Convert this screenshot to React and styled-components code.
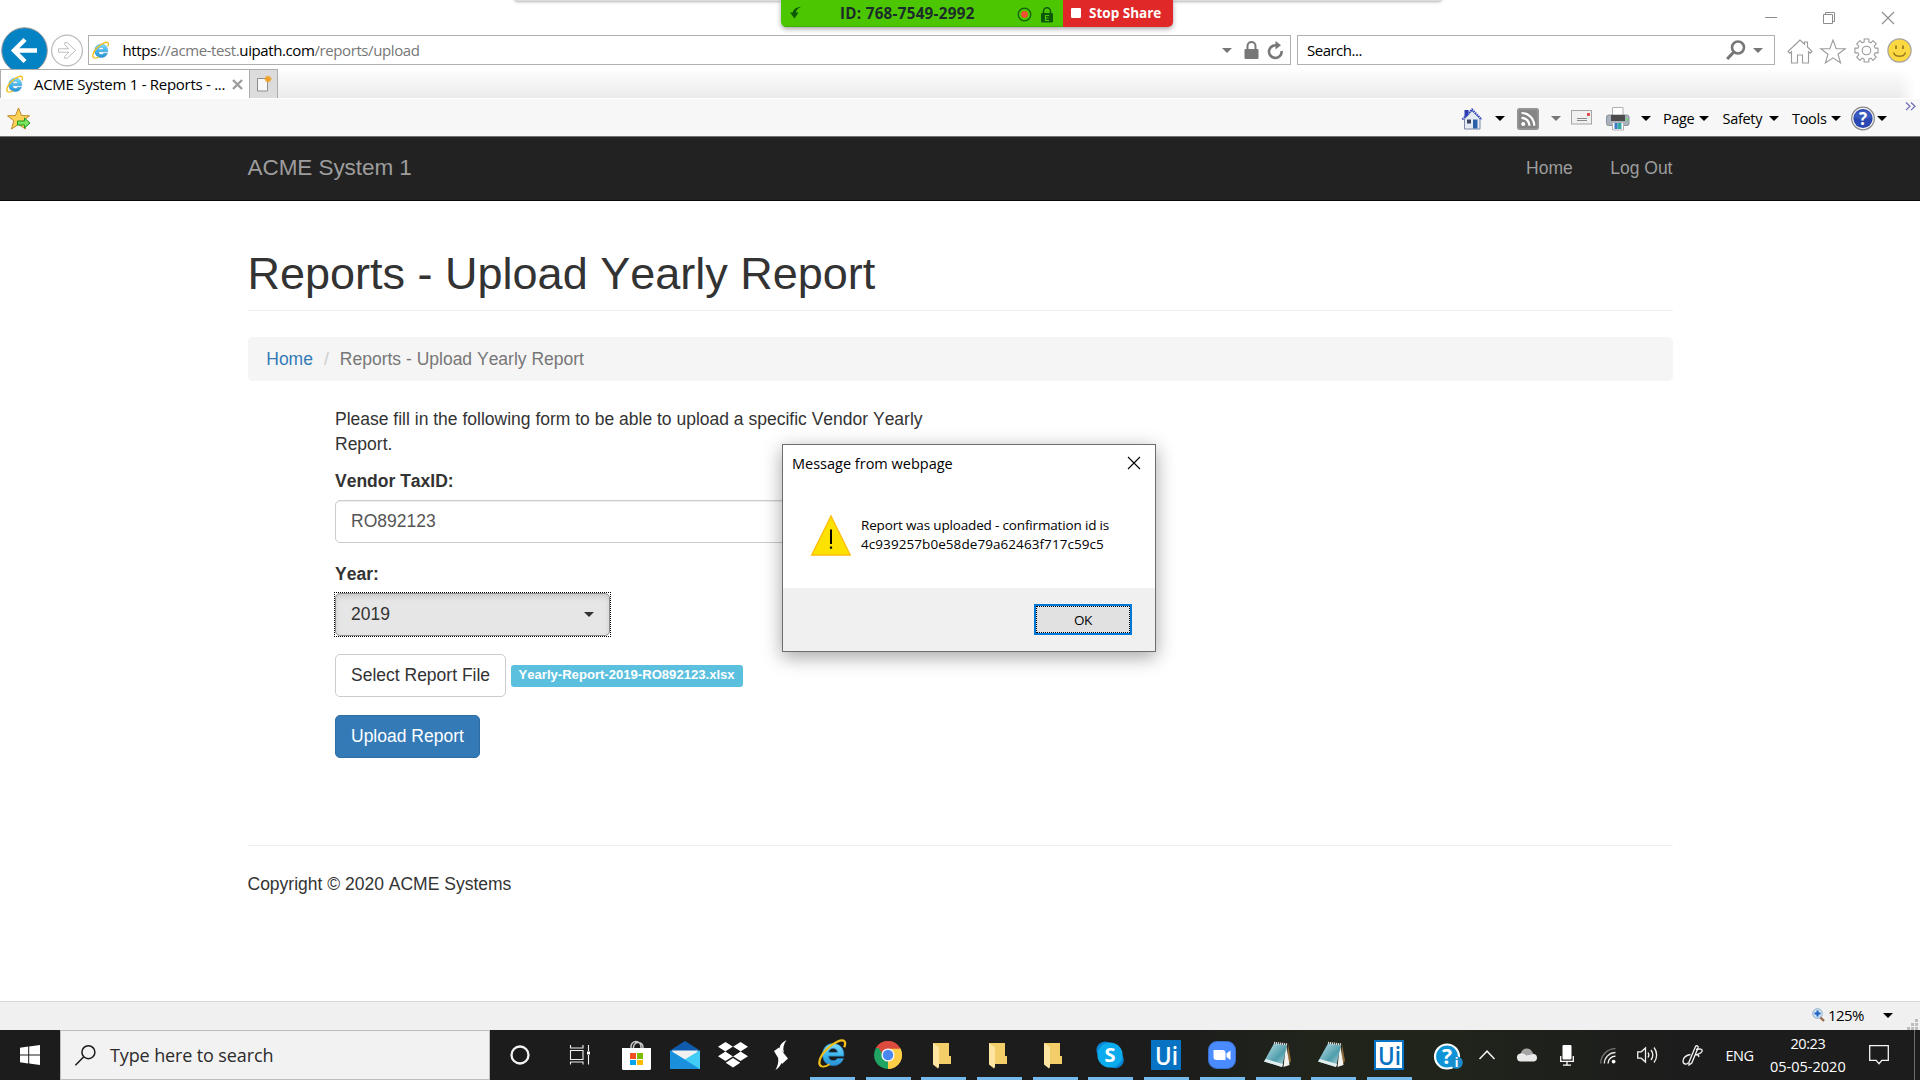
import React from "react";
import styled, { createGlobalStyle } from "styled-components";

const UI = '"Open Sans", "Noto Sans", sans-serif';
const ARIAL = '"Liberation Sans", Arial, sans-serif';

const GlobalStyle = createGlobalStyle`
  *, *::before, *::after { box-sizing: border-box; }
  html, body { margin: 0; padding: 0; background: #fff; overflow: hidden; }
  svg { display: block; overflow: visible; }
`;

const Screen = styled.div`
  position: relative;
  width: 1920px;
  height: 1080px;
  display: flex;
  flex-direction: column;
  background: #fff;
  overflow: hidden;
  font-family: ${UI};
`;

/* A fixed-width place in a bar, with the space that precedes it. */
const Slot = styled.div`
  flex: none;
  display: flex;
  align-items: center;
  width: ${(p) => p.$w}px;
  margin-left: ${(p) => p.$ml || 0}px;
  margin-top: ${(p) => p.$mt || 0}px;
`;

const Label = styled.span`
  white-space: nowrap;
  font-size: ${(p) => p.$size || 15}px;
  font-weight: ${(p) => p.$weight || 400};
  letter-spacing: ${(p) => p.$ls || 0}px;
  color: ${(p) => p.$color || "#000"};
`;

const Caret = styled.i`
  display: block;
  border: ${(p) => p.$s || 5}px solid transparent;
  border-top-color: ${(p) => p.$color || "#000"};
  border-bottom: 0;
`;

/* ---------- browser chrome ---------- */

const Caption = styled.div`
  height: 34px;
  flex: none;
  display: flex;
  align-items: flex-start;
  padding-top: 11px;
`;

const AddressRow = styled.div`
  height: 35px;
  flex: none;
  display: flex;
  align-items: flex-start;
`;

const BackButton = styled.div`
  width: 50px;
  height: 42px;
  margin-top: -7px;
  overflow: hidden;
`;

const ForwardButton = styled.div`
  width: 34px;
  height: 34px;
  margin-top: 0;
`;

const Field = styled.div`
  height: 30px;
  margin-top: 1px;
  margin-left: ${(p) => p.$ml}px;
  width: ${(p) => p.$w}px;
  flex: none;
  border: 1px solid #b0b0b0;
  background: #fff;
  display: flex;
  align-items: center;
`;

const Dim = styled.span`
  color: #777;
`;

const TabRow = styled.div`
  height: 29px;
  flex: none;
  display: flex;
  background: linear-gradient(#fff 0%, #f8f8f8 30%, #ebebeb 100%);
`;

const Tab = styled.div`
  width: 250px;
  border: 1px solid #adadad;
  border-bottom: 0;
  background: #fff;
  display: flex;
  align-items: center;
`;

const NewTab = styled.div`
  width: 28px;
  border: 1px solid #adadad;
  border-left: 0;
  border-bottom: 0;
  background: #dcdcdc;
  display: flex;
  align-items: center;
  justify-content: center;
`;

const TabRowEdge = styled.div`
  width: 22px;
  margin-left: auto;
  background: linear-gradient(90deg, rgba(255, 255, 255, 0), #fff 80%);
`;

const CommandBar = styled.div`
  height: 39px;
  flex: none;
  display: flex;
  align-items: center;
  padding-top: 2px;
  background: #f7f7f7;
  border-top: 1px solid #fff;
  border-bottom: 1px solid #6f7373;
`;

/* ---------- meeting share bar ---------- */

const ShareShadow = styled.div`
  position: absolute;
  top: -8px;
  left: 514px;
  width: 928px;
  height: 9px;
  border-radius: 4px;
  background: #dcdcdc;
  box-shadow: 0 1px 3px rgba(0, 0, 0, 0.3);
`;

const ShareBar = styled.div`
  position: absolute;
  top: 0;
  left: 781px;
  width: 392px;
  height: 27px;
  display: flex;
  border-radius: 0 0 5px 5px;
  overflow: hidden;
  box-shadow: 0 2px 5px rgba(0, 0, 0, 0.35);
`;

const ShareInfo = styled.div`
  width: 282px;
  display: flex;
  align-items: center;
  background: #4cc600;
  border-bottom: 1px solid #40ae00;
`;

const StopShare = styled.div`
  width: 110px;
  display: flex;
  align-items: center;
  background: #e02828;
  padding-bottom: 2px;
`;

const StopSquare = styled.i`
  width: 10px;
  height: 10px;
  margin-left: 8px;
  background: #fff;
  border-radius: 1px;
`;

/* ---------- web page ---------- */

const Page = styled.main`
  flex: 1;
  display: flex;
  flex-direction: column;
  font-family: ${ARIAL};
  font-size: 17.5px;
  line-height: 25px;
  font-kerning: none;
  color: #333;
`;

const Navbar = styled.nav`
  height: 64px;
  flex: none;
  background: #222;
  border-bottom: 1px solid #080808;
  padding: 19px 247.5px 0;
  display: flex;
  justify-content: space-between;
  color: #9d9d9d;
`;

const Brand = styled.div`
  font-size: 22.5px;
  letter-spacing: -0.06px;
  margin-top: -1px;
`;

const NavLinks = styled.div`
  display: flex;
  gap: 37.5px;
`;

const Container = styled.div`
  width: 1425px;
  margin: 0 auto;
  display: flex;
  flex-direction: column;
`;

const Title = styled.h1`
  margin: 48px 0 0;
  padding-bottom: 11.5px;
  border-bottom: 1px solid #eee;
  font-size: 45px;
  line-height: 49.5px;
  font-weight: 400;
`;

const Breadcrumb = styled.div`
  margin-top: 26px;
  height: 44px;
  padding: 9.5px 18.75px;
  border-radius: 5px;
  background: #f5f5f5;
  color: #777;
  display: flex;
`;

const Crumb = styled.span`
  color: ${(p) => p.$color || "#777"};
  margin-right: ${(p) => p.$mr || 0}px;
`;

const Form = styled.div`
  margin: 26px 0 0 87.5px;
  width: 602px;
  display: flex;
  flex-direction: column;
  align-items: flex-start;
`;

const Intro = styled.p`
  margin: 0 0 12px;
`;

const FieldLabel = styled.label`
  font-weight: 700;
  margin-bottom: 6px;
`;

const Box = styled.div`
  height: 43px;
  margin-bottom: 18px;
  padding: 8px 15px;
  border: 1px solid #ccc;
  border-radius: 5px;
  background: #fff;
`;

const TextInput = styled(Box)`
  width: 100%;
  margin-bottom: 19px;
  color: #555;
  box-shadow: inset 0 1px 1px rgba(0, 0, 0, 0.075);
`;

const FocusRing = styled.div`
  width: 277px;
  margin: -1px 0 17px -1px;
  border: 1px dotted #000;
`;

const Select = styled(Box)`
  margin: 0;
  display: flex;
  align-items: center;
  justify-content: space-between;
  background: #e6e6e6;
  border-color: #8c8c8c;
  box-shadow: inset 0 3px 5px rgba(0, 0, 0, 0.125);
`;

const FileRow = styled.div`
  display: flex;
  gap: 4.5px;
`;

const FileBadge = styled.span`
  margin-top: 11px;
  height: 22px;
  padding: 0 7.9px;
  border-radius: 3px;
  background: #5bc0de;
  color: #fff;
  font-size: 13.1px;
  font-weight: 700;
  line-height: 20px;
`;

const Submit = styled(Box)`
  background: #337ab7;
  border-color: #2e6da4;
  color: #fff;
`;

const Footer = styled.footer`
  margin-top: 69px;
  border-top: 1px solid #eee;
  padding-top: 26px;
`;

/* ---------- alert window ---------- */

const Dialog = styled.div`
  position: absolute;
  left: 782px;
  top: 444px;
  width: 374px;
  height: 208px;
  border: 1px solid #6d6d6d;
  background: #fff;
  display: flex;
  flex-direction: column;
  box-shadow: 0 5px 18px rgba(0, 0, 0, 0.36);
`;

const DialogTitle = styled.div`
  height: 36px;
  padding: 0 15px 0 9px;
  display: flex;
  align-items: center;
  justify-content: space-between;
`;

const DialogBody = styled.div`
  height: 107px;
  padding: 34px 0 0 28px;
  display: flex;
  gap: 10px;
`;

const DialogText = styled.div`
  display: flex;
  flex-direction: column;
  line-height: 19px;
  margin-top: 1px;
`;

const DialogFooter = styled.div`
  flex: 1;
  background: #f0f0f0;
  display: flex;
  justify-content: flex-end;
  padding: 16px 23px 0 0;
`;

const OkButton = styled.div`
  width: 98px;
  height: 31px;
  border: 2px solid #0078d7;
  background: #e1e1e1;
  outline: 1px dotted #000;
  outline-offset: -3px;
  display: flex;
  align-items: center;
  justify-content: center;
`;

/* ---------- status bar and taskbar ---------- */

const StatusBar = styled.div`
  height: 29px;
  flex: none;
  border-top: 1px solid #d7d7d7;
  background: #f0f0f0;
  display: flex;
  align-items: center;
  padding-bottom: 2px;
`;

const Taskbar = styled.div`
  height: 50px;
  flex: none;
  display: flex;
  background: linear-gradient(90deg, #1c1c1c 0%, #1c1c1c 60%, #20241b 68%, #20241b 76%, #1c1c1c 88%);
`;

const Start = styled.div`
  width: 60px;
  display: flex;
  align-items: center;
  justify-content: center;
`;

const TaskSearch = styled.div`
  width: 430px;
  border: 1px solid #bcbcbc;
  background: #f2f2f2;
  display: flex;
  align-items: center;
`;

const Pinned = styled.div`
  width: 320px;
  display: flex;
`;

const Running = styled.div`
  display: flex;
  gap: 10.7px;
`;

const AppCell = styled.div`
  width: 45px;
  height: 50px;
  padding-top: ${(p) => p.$top || 10}px;
  padding-right: ${(p) => p.$right || 1}px;
  border-bottom: 3px solid #76b9ed;
  display: flex;
  justify-content: center;
  align-items: flex-start;
`;

const Tray = styled.div`
  display: flex;
  flex: 1;
  align-items: center;
`;

const Clock = styled.div`
  width: 90px;
  margin-left: 7.5px;
  display: flex;
  flex-direction: column;
  align-items: center;
  line-height: 23px;
`;

const ShowDesktop = styled.div`
  width: 6px;
  height: 50px;
  margin-left: auto;
  border-left: 1px solid #6b6b6b;
`;

/* ---------- drawings ---------- */

const IELogo = ({ size, id }) => (
  <svg width={size} height={size} viewBox="0 0 28 28">
    <defs>
      <linearGradient id={id} x1="0" y1="0" x2="0" y2="1">
        <stop offset="0" stopColor="#7fdcfb" />
        <stop offset="0.55" stopColor="#3cb4ec" />
        <stop offset="1" stopColor="#2a8fd6" />
      </linearGradient>
    </defs>
    <path
      d="M15 3.5C9 3.5 4.5 8 4.5 14.5S9 25.7 15.2 25.7c5 0 8.800-2.700 10.300-7.200h-6.300c-.8 1.400-2.100 2.100-3.900 2.100-2.800 0-4.500-1.700-4.600-4.400h15.200C26.500 8.500 22 3.500 15 3.500zM10.800 12.200c.4-2.400 1.900-3.700 4.300-3.700 2.500 0 4 1.300 4.300 3.700z"
      fill={`url(#${id})`}
      stroke="#1c78b8"
      strokeWidth="0.6"
    />
    <path
      d="M4 26.500C-1 25 1.500 16.500 8.500 9.500 15.500 2.500 24 -1.500 26.600 1.500c1 1.200.7 3.300-.4 5.800"
      fill="none"
      stroke="#f5bf1a"
      strokeWidth="2.200"
    />
    <path d="M4 26.500c2.200.600 5-.6 7.600-2.300" fill="none" stroke="#f5bf1a" strokeWidth="1.800" />
  </svg>
);

const BackArrow = () => (
  <svg width="50" height="46" viewBox="0 0 50 46">
    <circle cx="24.500" cy="23.500" r="22.800" fill="#0383c4" stroke="#9a9a9a" strokeWidth="1" />
    <path d="M37 23.500H14M25 12.500l-11 11 11 11" fill="none" stroke="#fff" strokeWidth="4.400" />
  </svg>
);

const ForwardArrow = () => (
  <svg width="34" height="34" viewBox="0 0 34 34">
    <circle cx="17" cy="16.500" r="15.400" fill="#fff" stroke="#b9b9b9" strokeWidth="1.200" />
    <path d="M8.500 14.800h10.200l-4-4.300V8.700h2.600l8.200 7.800-8.200 7.800h-2.600v-1.800l4-4.300H8.500z" fill="none" stroke="#bdbdbd" strokeWidth="1" />
  </svg>
);

const GreyLock = () => (
  <svg width="15" height="18" viewBox="0 0 15 18">
    <path d="M3.500 9V5a4 4 0 018 0v4" fill="none" stroke="#777" strokeWidth="2" />
    <rect x="0.500" y="8" width="14" height="10" rx="1" fill="#777" />
  </svg>
);

const Refresh = () => (
  <svg width="17" height="19" viewBox="0 0 17 19">
    <path d="M11.500 5.200A6.300 6.300 0 1014.600 10" fill="none" stroke="#777" strokeWidth="2.600" />
    <path d="M8.500 0l5.500 4.200-5.500 4.300z" fill="#777" />
  </svg>
);

const Magnifier = () => (
  <svg width="19" height="20" viewBox="0 0 19 20">
    <circle cx="12" cy="7.500" r="6" fill="none" stroke="#777" strokeWidth="2.600" />
    <path d="M7.800 12L1.200 19" stroke="#777" strokeWidth="3.200" />
  </svg>
);

const HomeOutline = () => (
  <svg width="26" height="25" viewBox="0 0 26 25" fill="none" stroke="#9b9b9b" strokeWidth="1.100">
    <path d="M13 1L1 12.500l1.800 1.700 1.700-1.500V24h6v-8h5v8h6V12.700l1.700 1.500 1.800-1.700L20.500 8V3h-3v2.200z" />
  </svg>
);

const StarOutline = () => (
  <svg width="26" height="25" viewBox="0 0 26 25" fill="none" stroke="#9b9b9b" strokeWidth="1.100">
    <path d="M13 1l3.200 8.600 9 .2-7.200 5.400 2.600 8.800-7.600-5.200-7.600 5.200L8 15.200.8 9.800l9-.2z" />
  </svg>
);

const Gear = () => {
  const pts = [];
  for (let i = 0; i < 8; i++) {
    [[-0.27, 8.800], [-0.2, 11.800], [0.2, 11.800], [0.27, 8.800]].forEach(([da, r]) => {
      const a = (i * Math.PI) / 4 + da - Math.PI / 2;
      pts.push(`${(12.5 + r * Math.cos(a)).toFixed(2)},${(12.5 + r * Math.sin(a)).toFixed(2)}`);
    });
  }
  return (
    <svg width="25" height="25" viewBox="0 0 25 25" fill="none" stroke="#9b9b9b" strokeWidth="1.100">
      <polygon points={pts.join(" ")} strokeLinejoin="round" />
      <circle cx="12.500" cy="12.500" r="4.300" />
    </svg>
  );
};

const Smiley = () => (
  <svg width="25" height="25" viewBox="0 0 25 25">
    <circle cx="12.500" cy="12.500" r="11.600" fill="#fcd843" stroke="#a1a1a1" strokeWidth="1.200" />
    <path d="M9 7.500v3.500M16 7.500v3.500" stroke="#9a7d1c" strokeWidth="1.800" />
    <path d="M6.500 14.500c1.500 5 10.500 5 12 0" fill="none" stroke="#9a7d1c" strokeWidth="1.500" />
  </svg>
);

const WindowMin = () => (
  <svg width="12" height="13" viewBox="0 0 12 13"><path d="M0 6.500h12" stroke="#8c8c8c" /></svg>
);
const WindowRestore = () => (
  <svg width="13" height="13" viewBox="0 0 13 13" fill="none" stroke="#8c8c8c">
    <path d="M0.500 3.500h9v9h-9zM2.500 3.500v-2h9v9h-2" />
  </svg>
);
const WindowClose = ({ color = "#8c8c8c" }) => (
  <svg width="12" height="12" viewBox="0 0 12 12"><path d="M0 0l12 12M12 0L0 12" stroke={color} strokeWidth="1.100" /></svg>
);

const NewTabIcon = () => (
  <svg width="16" height="16" viewBox="0 0 16 16">
    <path d="M1.500 2.500h10V15h-10z" fill="#f8f8f8" stroke="#8d8d8d" />
    <path d="M12 -0.500v7M8.500 3h7M9.500 0.500l5 5M14.500 0.500l-5 5" stroke="#f0a020" strokeWidth="1.300" />
  </svg>
);

const FavStar = () => (
  <svg width="24" height="24" viewBox="0 0 24 24">
    <path d="M11.500 1l3 7.500 8 .3-6.300 5 2.300 8.200-7-4.600L4.500 22l2.300-8.200L.5 8.800l8-.3z" fill="#fbd257" stroke="#c08a2a" strokeWidth="1" />
    <path d="M10.500 14h7v-3l5.500 5-5.500 5v-3h-7z" fill="#7be35f" stroke="#1f9a22" strokeWidth="1" />
  </svg>
);

const CmdHome = () => (
  <svg width="21" height="22" viewBox="0 0 21 22">
    <path d="M2.500 11v10H18V11L10 3z" fill="#e6eaf2" stroke="#7e8ba6" strokeWidth="1" />
    <path d="M2.500 2h4v5l-4 3z" fill="#2c3bb0" />
    <path d="M0.300 11.500L10 1.500l9.700 10" fill="none" stroke="#3546c4" strokeWidth="2" strokeDasharray="1.500 0.800" />
    <path d="M5 11.500h4v4H5z" fill="#3b4664" />
    <path d="M11 11.500h4.500v9H11z" fill="#2b61a8" />
  </svg>
);

const Rss = () => (
  <svg width="22" height="22" viewBox="0 0 22 22">
    <rect width="22" height="22" rx="3" fill="#858585" />
    <rect x="1" y="1" width="20" height="20" rx="2" fill="none" stroke="#a2a2a2" />
    <circle cx="6.200" cy="16" r="2" fill="#fff" />
    <path d="M4.500 9.800a8 8 0 018 8M4.500 5a12.800 12.800 0 0112.800 12.800" fill="none" stroke="#fff" strokeWidth="2.200" />
  </svg>
);

const CmdMail = () => (
  <svg width="21" height="15" viewBox="0 0 21 15">
    <rect x="0.500" y="0.500" width="20" height="13.500" fill="#f0f0f0" stroke="#a5a5a5" />
    <path d="M6 8.500h10M6 10.500h10" stroke="#8a8a8a" />
    <rect x="16" y="3" width="3" height="3" fill="#e05050" />
  </svg>
);

const Printer = () => (
  <svg width="24" height="24" viewBox="0 0 24 24">
    <path d="M6.500 0.500h10.500V9H6.500z" fill="#fff" stroke="#b0b0b0" />
    <rect x="0.500" y="8" width="22.500" height="10.500" rx="2" fill="#a9b2ba" stroke="#8a949c" />
    <rect x="5" y="8" width="14" height="6" fill="#4b4b4b" />
    <path d="M6.500 15.500h11V23h-11z" fill="#fff" stroke="#b0b0b0" />
    <path d="M8.500 16h3v6h-3z" fill="#3a79c9" />
    <path d="M11.500 16h4v6h-4z" fill="#35a9a3" />
    <rect x="20" y="11.500" width="2" height="2" fill="#63e063" />
  </svg>
);

const HelpBall = () => (
  <svg width="24" height="25" viewBox="0 0 24 25">
    <circle cx="12" cy="12.500" r="11.300" fill="#f2f2f2" stroke="#888" strokeWidth="1.200" />
    <circle cx="12" cy="12.500" r="9.600" fill="#2a47b2" />
    <path d="M3 11a9.500 9.500 0 0118 0c-5 3-13 3-18 0z" fill="#4868c8" opacity=".6" />
    <text x="12" y="18.500" textAnchor="middle" fill="#fff" fontFamily={UI} fontSize="17" fontWeight="700">?</text>
  </svg>
);

const MoreChevrons = () => (
  <svg width="11" height="9" viewBox="0 0 11 9" fill="none" stroke="#6a6ab4" strokeWidth="1.200">
    <path d="M1 .5l4 3.800-4 3.800M6 .5l4 3.800-4 3.800" />
  </svg>
);

const ShareArrow = () => (
  <svg width="12" height="12" viewBox="0 0 12 12">
    <path d="M11 0C6 0 3 2.500 2.800 5.500H0L4.500 11.500 8.500 5.500H6C6.200 3 8 1 11 0z" fill="#0c5a08" />
  </svg>
);

const RecordDot = () => (
  <svg width="15" height="15" viewBox="0 0 15 15">
    <circle cx="7.500" cy="7.500" r="6.300" fill="none" stroke="#14600a" strokeWidth="1.300" />
    <circle cx="7.500" cy="7.500" r="3.400" fill="#f4502e" />
  </svg>
);

const GreenLock = () => (
  <svg width="12" height="16" viewBox="0 0 12 16">
    <path d="M2.500 7V4.200a3.500 3.500 0 017 0V7" fill="none" stroke="#0c5a08" strokeWidth="1.500" />
    <rect x="0" y="6" width="12" height="9.500" rx="1" fill="#0c5a08" />
    <path d="M8 8.500H4.500v5H8M4.500 11H7.500" fill="none" stroke="#4cc600" strokeWidth="1.100" />
  </svg>
);

const Warning = () => (
  <svg width="40" height="41" viewBox="0 0 40 41">
    <path d="M20 1L39.300 40H.7z" fill="#fde100" stroke="#fdbd08" strokeWidth="1.300" />
    <path d="M20 14.500v14.500" stroke="#000" strokeWidth="2" />
    <path d="M20 31.500v2.200" stroke="#000" strokeWidth="2.200" />
  </svg>
);

const ZoomGlass = () => (
  <svg width="13" height="14" viewBox="0 0 13 14">
    <path d="M8 9l4 4" stroke="#9b6a48" strokeWidth="2.400" />
    <circle cx="5.500" cy="5.500" r="4.800" fill="#cfe4f7" stroke="#8fa9c4" />
    <path d="M5.500 2.500v6M2.500 5.500h6" stroke="#1b5fc0" strokeWidth="2" />
  </svg>
);

const Grip = () => (
  <svg width="11" height="11" viewBox="0 0 11 11" fill="#bdbdbd">
    {[[8, 0], [8, 4], [4, 4], [8, 8], [4, 8], [0, 8]].map(([x, y]) => (
      <rect key={`${x}-${y}`} x={x} y={y} width="3" height="3" />
    ))}
  </svg>
);

const WindowsLogo = () => (
  <svg width="20" height="20" viewBox="0 0 20 20" fill="#fff">
    <path d="M0 2.800l8.200-1.200v7.900H0zM9.200 1.400L20 0v9.500H9.200zM0 10.500h8.200v7.900L0 17.200zM9.200 10.500H20V20L9.200 18.600z" />
  </svg>
);

const SearchGlass = () => (
  <svg width="22" height="21" viewBox="0 0 22 21" fill="none" stroke="#1a1a1a" strokeWidth="1.500">
    <circle cx="13.400" cy="7.200" r="6.500" />
    <path d="M8.600 12L.4 20.300" />
  </svg>
);

const CortanaRing = () => (
  <svg width="20" height="20" viewBox="0 0 20 20"><circle cx="10" cy="10" r="8.500" fill="none" stroke="#f4f4f4" strokeWidth="2.300" /></svg>
);

const TaskView = () => (
  <svg width="20" height="20" viewBox="0 0 20 20" fill="none" stroke="#f0f0f0" strokeWidth="1.100">
    <path d="M.5 5.500h12.500v9H.5zM.5 0v3h12.500V0M.5 19.500V17h12.500v2.500M18.500 0v6M18.500 10v9.500" />
    <rect x="17" y="6.500" width="3" height="3" fill="#fff" stroke="none" />
  </svg>
);

const Store = () => (
  <svg width="29" height="29" viewBox="0 0 29 29">
    <path d="M9 8V5.500a5 5 0 0110 0V8M11.500 8V6a4.700 4.700 0 015-4.500A4.700 4.700 0 0121 6v2" fill="none" stroke="#c9c9c9" strokeWidth="1.500" />
    <path d="M0 7h29v20.500a1.500 1.500 0 01-1.500 1.500h-26A1.500 1.500 0 010 27.500z" fill="#fff" />
    <path d="M8 12h6v6H8z" fill="#f25022" />
    <path d="M15 12h6v6h-6z" fill="#7fba00" />
    <path d="M8 19h6v5H8z" fill="#00a4ef" />
    <path d="M15 19h6v5h-6z" fill="#ffb900" />
  </svg>
);

const Mail = () => (
  <svg width="30" height="29" viewBox="0 0 30 29">
    <path d="M0 9.500L15 0l15 9.500v4H0z" fill="#0f5cae" />
    <path d="M2 9.500h26l-2 6-11 6-11-6z" fill="#f1f1f1" />
    <path d="M0 9.500l15 9 15-9V28H0z" fill="#35bdf0" />
    <path d="M0 9.500L30 28H0z" fill="#1a90dd" />
    <path d="M30 9.500V28L15 18.500z" fill="#41cdf6" />
  </svg>
);

const Dropbox = () => (
  <svg width="30" height="26" viewBox="0 0 30 26" fill="#fff">
    <path d="M7.500 0L15 4.700 7.500 9.500 0 4.700zM22.500 0L30 4.700l-7.500 4.800L15 4.700zM7.500 9.500l7.500 4.700L7.500 19 0 14.200zM22.500 9.500l7.500 4.700-7.500 4.800-7.500-4.800zM15 16l7.300 4.700L15 25.500l-7.300-4.800z" />
    <path d="M15 4.700l7.500 4.800L15 14.200 7.500 9.500z" fill="#1c1c1c" />
  </svg>
);

const SMark = () => (
  <svg width="14" height="30" viewBox="0 0 14 30" fill="#fff">
    <path d="M12.500 0C7 3 5 6.500 5.800 9.500L10 12.800C8.500 8.500 9.500 4.500 12.500 0z" />
    <path d="M0 11L5 7.500 14 18.500 8 24 6.500 22z" />
    <path d="M1.500 30c5-3.500 6.500-7 5.500-9.500L4 18c1 4-.5 8-2.500 12z" />
  </svg>
);

const Chrome = () => (
  <svg width="28" height="28" viewBox="0 0 28 28">
    <path d="M14 14L1.880 7A14 14 0 0126.120 7z" fill="#dc4b3e" />
    <path d="M14 14L26.120 7A14 14 0 0114 28z" fill="#fdcd45" />
    <path d="M14 14v14A14 14 0 011.880 7z" fill="#1fa463" />
    <path d="M14 7.500h12.400A14 14 0 0114 28l6-11z" fill="#fdcd45" />
    <path d="M1.880 7A14 14 0 0126.400 7.500H14z" fill="#dc4b3e" />
    <path d="M1.880 7l6.500 10.500L14 14 12 7.500z" fill="#1fa463" />
    <path d="M3.500 5l5 8 5.500-6z" fill="#dc4b3e" />
    <circle cx="14" cy="14" r="6.600" fill="#f4f4f4" />
    <circle cx="14" cy="14" r="5.200" fill="#4a86f0" />
  </svg>
);

const Folder = () => (
  <svg width="18" height="27" viewBox="0 0 18 27">
    <path d="M0 1h16v13h2v8H4z" fill="#f2cd68" />
    <path d="M0 1l6 4v20l-1 1.500-5-4z" fill="#fde4a0" />
  </svg>
);

const Skype = () => (
  <svg width="28" height="28" viewBox="0 0 28 28">
    <circle cx="9" cy="9" r="8.600" fill="#0a84d4" />
    <circle cx="19.500" cy="19" r="8.300" fill="#0a84d4" />
    <circle cx="14" cy="14" r="12.600" fill="#0cabed" />
    <text x="14" y="21.200" textAnchor="middle" fill="#fff" fontFamily={UI} fontSize="20" fontWeight="700">S</text>
  </svg>
);

const UiLogo = ({ light }) => (
  <svg width="30" height="30" viewBox="0 0 30 30">
    <rect width="30" height="30" rx="0.500" fill="#0773c2" />
    {light && <rect x="2" y="2" width="26" height="26" fill="#fff" />}
    <text x="15.500" y="24.500" textAnchor="middle" fill={light ? "#0773c2" : "#fff"} fontFamily={UI} fontSize="25" fontWeight="600" textLength="23" lengthAdjust="spacingAndGlyphs">
      Ui
    </text>
  </svg>
);

const ZoomApp = () => (
  <svg width="28" height="28" viewBox="0 0 28 28">
    <rect x="0.500" y="0.500" width="27" height="27" rx="8.500" fill="#4a8cff" stroke="#3a6fd0" />
    <path d="M5.500 9h9a3 3 0 013 3v7h-9a3 3 0 01-3-3zM18.500 12.500L22.500 9.500v9.500l-4-3z" fill="#fff" />
  </svg>
);

const Notepad = ({ id }) => (
  <svg width="28" height="27" viewBox="0 0 28 27">
    <defs>
      <linearGradient id={id} x1="0" y1="0" x2="1" y2="1">
        <stop offset="0" stopColor="#bfe3ea" />
        <stop offset="0.600" stopColor="#4f9dab" />
        <stop offset="1" stopColor="#cfe6ea" />
      </linearGradient>
    </defs>
    <path d="M24 3l3 17-4 5z" fill="#8e6a38" />
    <path d="M22 3l3.500 21-6 2z" fill="#f2f2ee" />
    <path d="M10 2.500L23 4l-5 22L0 20.500z" fill={`url(#${id})`} />
    <path d="M10 1.800l13.500 1.700" stroke="#d8d8d8" strokeWidth="2.200" strokeDasharray="1.200 0.800" />
    <path d="M0 20.500l18 5.500 1-3-17-5z" fill="#e4eeee" />
  </svg>
);

const SupportHelp = () => (
  <svg width="30" height="28" viewBox="0 0 30 28">
    <circle cx="13" cy="13.500" r="12" fill="#0d93d6" stroke="#fff" strokeWidth="2.200" />
    <text x="13" y="21" textAnchor="middle" fill="#fff" fontFamily={UI} fontSize="21" fontWeight="700">?</text>
    <circle cx="22.500" cy="19.500" r="6.300" fill="#1a8ccc" />
    <text x="22.500" y="24" textAnchor="middle" fill="#fff" fontFamily={UI} fontSize="12" fontWeight="700">i</text>
  </svg>
);

const ChevronUp = () => (
  <svg width="16" height="10" viewBox="0 0 16 10"><path d="M.5 9L8 1.200 15.500 9" fill="none" stroke="#f2f2f2" strokeWidth="1.500" /></svg>
);

const Cloud = () => (
  <svg width="20" height="14" viewBox="0 0 20 14">
    <path d="M4 5a6 6 0 0111-1.500L17 7l-9 3-6-1z" fill="#a4a4a4" />
    <path d="M4.500 13.500a4 4 0 01-1-8c2-.5 4 .5 6 2l7-1.500a3.800 3.800 0 01.5 7.500z" fill="#e9e9e9" />
  </svg>
);

const Mic = () => (
  <svg width="14" height="21" viewBox="0 0 14 21">
    <rect x="2.500" y="0" width="9" height="14.500" rx="1" fill="#fff" />
    <path d="M.7 11v5.300h12.600V11M7 16.500V20M3 20.200h8" fill="none" stroke="#fff" strokeWidth="1.300" />
  </svg>
);

const Wifi = () => (
  <svg width="16" height="16" viewBox="0 0 16 16" fill="none" strokeWidth="1.300">
    <path d="M.7 15.500A14.800 14.800 0 0115.500 .7" stroke="#777" />
    <path d="M4.300 15.500A11.200 11.200 0 0115.500 4.500" stroke="#ddd" />
    <path d="M8 15.500A7.500 7.500 0 0115.500 8.200" stroke="#fff" />
    <circle cx="13.600" cy="13.600" r="1.900" fill="#fff" />
  </svg>
);

const Speaker = () => (
  <svg width="21" height="18" viewBox="0 0 21 18" fill="none" stroke="#f2f2f2" strokeWidth="1.300">
    <path d="M.7 5.800h3.500L8.500 2v14l-4.300-3.800H.7z" />
    <path d="M11 6.500c1 1.500 1 3.500 0 5M14 4c2.200 3 2.200 7 0 10M17 1.500c3.500 4.500 3.500 10.500 0 15" />
  </svg>
);

const Pen = () => (
  <svg width="21" height="21" viewBox="0 0 21 21" fill="none" stroke="#f2f2f2" strokeWidth="1.300">
    <path d="M7 17L13.500 1.500c.8-1.500 3.200-.5 2.600 1.200L9.800 18 7 20z" />
    <path d="M8.500 9.500c-4 .5-7.500 3-7.500 6.500s4 4 5.500 1.500M14 4.500c4-1 7-.5 6 2s-4 2.500-6.500 3.500c2.500-.5 4 .5 3 2" />
  </svg>
);

const ActionCenter = () => (
  <svg width="20" height="20" viewBox="0 0 20 20"><path d="M.7 .7h18.600v14.600h-6.500L10 18.700l-2.800-3.400H.7z" fill="none" stroke="#f4f4f4" strokeWidth="1.300" /></svg>
);

const TabClose = () => (
  <svg width="11" height="11" viewBox="0 0 11 11"><path d="M1 1l9 9M10 1l-9 9" stroke="#9d9d9d" strokeWidth="2.400" /></svg>
);

/* ---------- sections ---------- */

const Browser = () => (
  <>
    <Caption>
      <Slot $ml={1765} $w={12}><WindowMin /></Slot>
      <Slot $ml={46} $w={13}><WindowRestore /></Slot>
      <Slot $ml={46} $w={12} $mt={1}><WindowClose /></Slot>
    </Caption>
    <AddressRow>
      <BackButton><BackArrow /></BackButton>
      <ForwardButton><ForwardArrow /></ForwardButton>
      <Field $ml={4} $w={1203}>
        <Slot $ml={2.500} $w={17}><IELogo size={17} id="ieAddr" /></Slot>
        <Slot $ml={14} $w={300}>
          <Label $size={15} $ls={-0.4}>
            https<Dim>://acme-test.</Dim>uipath.com<Dim>/reports/upload</Dim>
          </Label>
        </Slot>
        <Slot $ml={799} $w={10}><Caret $color="#777" /></Slot>
        <Slot $ml={12} $w={15}><GreyLock /></Slot>
        <Slot $ml={8.500} $w={17}><Refresh /></Slot>
      </Field>
      <Field $ml={6} $w={478}>
        <Slot $ml={9} $w={60}><Label $size={15} $ls={-0.5}>Search...</Label></Slot>
        <Slot $ml={358.500} $w={19}><Magnifier /></Slot>
        <Slot $ml={8.500} $w={10}><Caret $color="#777" /></Slot>
      </Field>
      <Slot $ml={11.500} $w={26} $mt={5}><HomeOutline /></Slot>
      <Slot $ml={7.500} $w={26} $mt={5}><StarOutline /></Slot>
      <Slot $ml={7.500} $w={25} $mt={4}><Gear /></Slot>
      <Slot $ml={8} $w={25} $mt={4}><Smiley /></Slot>
    </AddressRow>
    <TabRow>
      <Tab>
        <Slot $ml={4.500} $w={17}><IELogo size={17} id="ieTab" /></Slot>
        <Slot $ml={11.500} $w={197.500}><Label $size={15} $ls={-0.28}>ACME System 1 - Reports - ...</Label></Slot>
        <TabClose />
      </Tab>
      <NewTab><NewTabIcon /></NewTab>
      <TabRowEdge />
    </TabRow>
    <CommandBar>
      <Slot $ml={7} $w={24}><FavStar /></Slot>
      <Slot $ml={1431} $w={21}><CmdHome /></Slot>
      <Slot $ml={11.500} $w={10}><Caret /></Slot>
      <Slot $ml={12} $w={22} $mt={1}><Rss /></Slot>
      <Slot $ml={12.500} $w={10}><Caret $color="#777" /></Slot>
      <Slot $ml={10} $w={21} $mt={-2}><CmdMail /></Slot>
      <Slot $ml={14} $w={24}><Printer /></Slot>
      <Slot $ml={10.500} $w={10}><Caret /></Slot>
      <Slot $ml={12.500} $w={36}><Label $size={14.500} $ls={-0.35}>Page</Label></Slot>
      <Slot $w={10}><Caret /></Slot>
      <Slot $ml={13.500} $w={46}><Label $size={14.500} $ls={-0.3}>Safety</Label></Slot>
      <Slot $w={10}><Caret /></Slot>
      <Slot $ml={13.500} $w={39}><Label $size={14.500} $ls={-0.3}>Tools</Label></Slot>
      <Slot $w={10}><Caret /></Slot>
      <Slot $ml={9.500} $w={24}><HelpBall /></Slot>
      <Slot $ml={2.500} $w={10}><Caret /></Slot>
      <Slot $ml={18} $w={11} $mt={-25}><MoreChevrons /></Slot>
    </CommandBar>
  </>
);

const Share = () => (
  <>
    <ShareShadow />
    <ShareBar>
      <ShareInfo>
        <Slot $ml={9} $w={12}><ShareArrow /></Slot>
        <Slot $ml={38} $w={137}><Label $size={15.200} $ls={0.28} $weight={700} $color="#1c2b2b">ID: 768-7549-2992</Label></Slot>
        <Slot $ml={39.500} $w={15} $mt={2}><RecordDot /></Slot>
        <Slot $ml={9} $w={12} $mt={3}><GreenLock /></Slot>
      </ShareInfo>
      <StopShare>
        <StopSquare />
        <Slot $ml={8} $w={74}><Label $size={13.500} $weight={700} $color="#fff">Stop Share</Label></Slot>
      </StopShare>
    </ShareBar>
  </>
);

const WebPage = () => (
  <Page>
    <Navbar>
      <Brand>ACME System 1</Brand>
      <NavLinks><span>Home</span><span>Log Out</span></NavLinks>
    </Navbar>
    <Container>
      <Title>Reports - Upload Yearly Report</Title>
      <Breadcrumb>
        <Crumb $color="#337ab7" $mr={11}>Home</Crumb>
        <Crumb $color="#ccc" $mr={11}>/</Crumb>
        <Crumb>Reports - Upload Yearly Report</Crumb>
      </Breadcrumb>
      <Form>
        <Intro>Please fill in the following form to be able to upload a specific Vendor Yearly Report.</Intro>
        <FieldLabel>Vendor TaxID:</FieldLabel>
        <TextInput>RO892123</TextInput>
        <FieldLabel>Year:</FieldLabel>
        <FocusRing>
          <Select>2019<Caret $color="#333" /></Select>
        </FocusRing>
        <FileRow>
          <Box>Select Report File</Box>
          <FileBadge>Yearly-Report-2019-RO892123.xlsx</FileBadge>
        </FileRow>
        <Submit>Upload Report</Submit>
      </Form>
      <Footer>Copyright © 2020 ACME Systems</Footer>
    </Container>
  </Page>
);

const Alert = () => (
  <Dialog>
    <DialogTitle>
      <Label $size={14.500}>Message from webpage</Label>
      <WindowClose color="#000" />
    </DialogTitle>
    <DialogBody>
      <Warning />
      <DialogText>
        <Label $size={13.500} $ls={-0.16}>Report was uploaded - confirmation id is</Label>
        <Label $size={13.500} $ls={0.07}>4c939257b0e58de79a62463f717c59c5</Label>
      </DialogText>
    </DialogBody>
    <DialogFooter><OkButton><Label $size={13.500} $ls={-0.3}>OK</Label></OkButton></DialogFooter>
  </Dialog>
);

const Desktop = () => (
  <>
    <StatusBar>
      <Slot $ml={1812} $w={13}><ZoomGlass /></Slot>
      <Slot $ml={3} $w={37}><Label $size={15} $ls={-0.6}>125%</Label></Slot>
      <Slot $ml={17.500} $w={10}><Caret /></Slot>
      <Slot $ml={14.500} $w={11} $mt={18}><Grip /></Slot>
    </StatusBar>
    <Taskbar>
      <Start><WindowsLogo /></Start>
      <TaskSearch>
        <Slot $ml={14} $w={22}><SearchGlass /></Slot>
        <Slot $ml={13} $w={181}><Label $size={18} $ls={-0.12} $color="#2b2b2b">Type here to search</Label></Slot>
      </TaskSearch>
      <Pinned>
        <Slot $ml={20} $w={20}><CortanaRing /></Slot>
        <Slot $ml={40} $w={20}><TaskView /></Slot>
        <Slot $ml={32} $w={29}><Store /></Slot>
        <Slot $ml={19} $w={30}><Mail /></Slot>
        <Slot $ml={18} $w={30}><Dropbox /></Slot>
        <Slot $ml={26} $w={14}><SMark /></Slot>
      </Pinned>
      <Running>
        <AppCell $right={2}><IELogo size={28} id="ieTask" /></AppCell>
        <AppCell $top={11}><Chrome /></AppCell>
        <AppCell $top={12} $right={3}><Folder /></AppCell>
        <AppCell $top={12} $right={3}><Folder /></AppCell>
        <AppCell $top={12} $right={4}><Folder /></AppCell>
        <AppCell $top={11}><Skype /></AppCell>
        <AppCell><UiLogo /></AppCell>
        <AppCell $top={11}><ZoomApp /></AppCell>
        <AppCell $top={11}><Notepad id="noteA" /></AppCell>
        <AppCell $top={11} $right={3}><Notepad id="noteB" /></AppCell>
        <AppCell><UiLogo light /></AppCell>
      </Running>
      <Tray>
        <Slot $ml={22} $w={30} $mt={3}><SupportHelp /></Slot>
        <Slot $ml={15} $w={16}><ChevronUp /></Slot>
        <Slot $ml={22} $w={20}><Cloud /></Slot>
        <Slot $ml={23} $w={14}><Mic /></Slot>
        <Slot $ml={26} $w={16} $mt={2}><Wifi /></Slot>
        <Slot $ml={21} $w={21}><Speaker /></Slot>
        <Slot $ml={24} $w={21}><Pen /></Slot>
        <Slot $ml={22.500} $w={30}><Label $size={14.500} $color="#fff" $ls={-0.45}>ENG</Label></Slot>
        <Clock>
          <Label $size={14.500} $color="#fff" $ls={-0.4}>20:23</Label>
          <Label $size={14.500} $color="#fff" $ls={0}>05-05-2020</Label>
        </Clock>
        <Slot $ml={16} $w={20}><ActionCenter /></Slot>
        <ShowDesktop />
      </Tray>
    </Taskbar>
  </>
);

export default function App() {
  return (
    <Screen>
      <GlobalStyle />
      <Browser />
      <WebPage />
      <Desktop />
      <Share />
      <Alert />
    </Screen>
  );
}
